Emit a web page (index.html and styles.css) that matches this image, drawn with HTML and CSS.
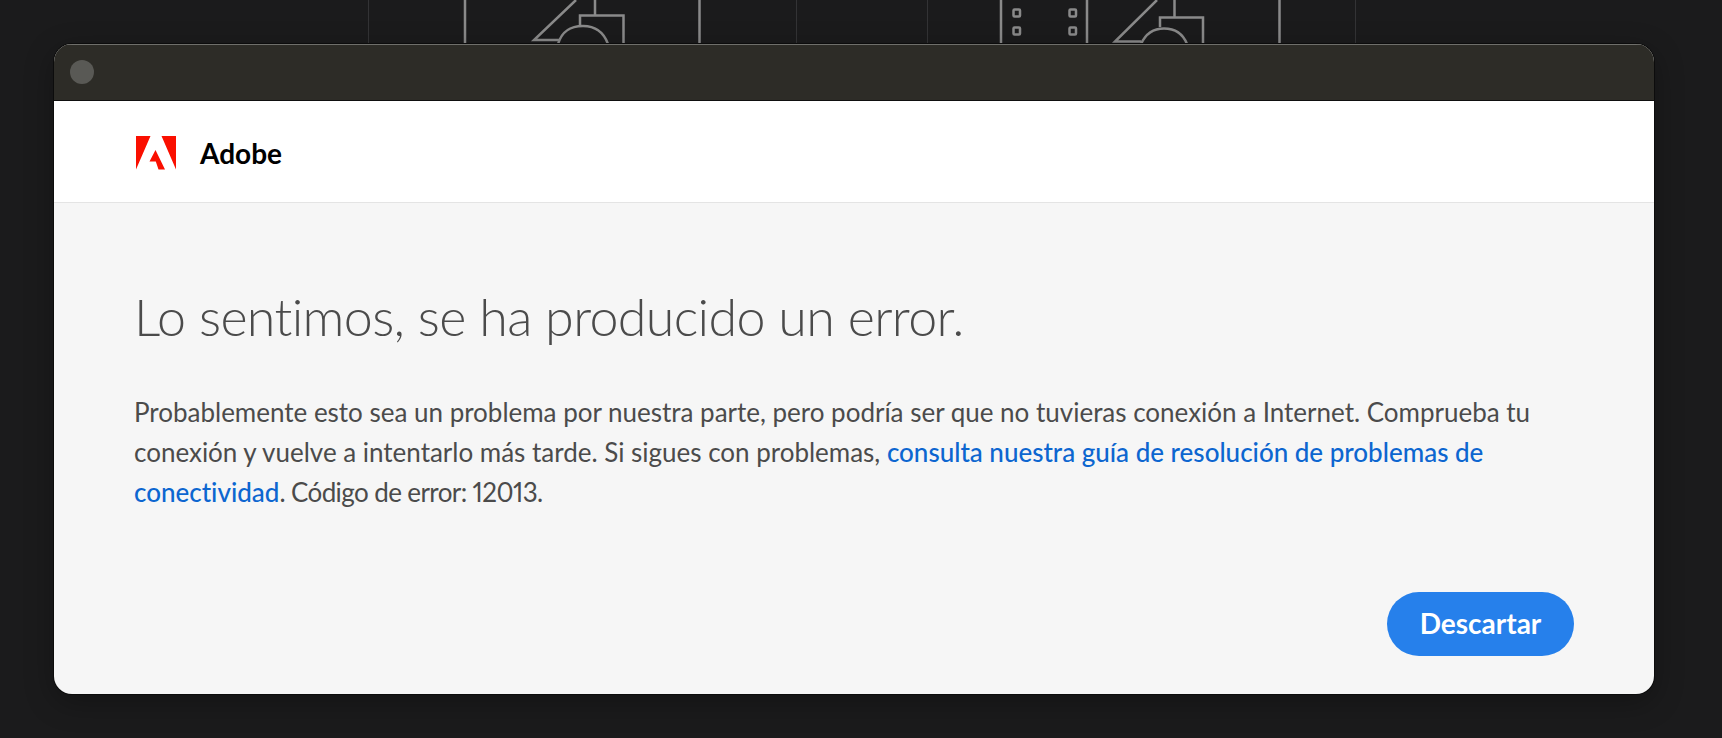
FILE: index.html
```html
<!DOCTYPE html>
<html lang="es">
<head>
<meta charset="utf-8">
<title>Adobe</title>
<link rel="stylesheet" href="styles.css">
</head>
<body>
<svg class="backdrop" width="1722" height="60" viewBox="0 0 1722 60" aria-hidden="true">
  <g class="faint">
    <path d="M368.5 0V44M796.5 0V44M927.5 0V44M1355.5 0V44"/>
  </g>
  <g class="art">
    <path d="M465 0V44M699.5 0V44M1001 0V44M1087 0V44M1279.5 0V44"/>
    <path d="M576 0L534 40H560M595 0V15M580 25V15.5H623.5V44M558 44C562 31 570 26 583 26C596 26 604 33 608 44"/>
    <path d="M1157 0L1115 41.5H1141M1174.5 0V17M1160 27V17.5H1203V44M1141 44C1146 33 1153 28.5 1164 28.5C1175 28.5 1183 34 1187 44"/>
    <rect x="1013.5" y="9.5" width="6.5" height="7" rx="1"/>
    <rect x="1013.5" y="27.5" width="6.5" height="7" rx="1"/>
    <rect x="1069.5" y="9.5" width="6.5" height="7" rx="1"/>
    <rect x="1069.5" y="27.5" width="6.5" height="7" rx="1"/>
  </g>
</svg>
<main class="dialog">
  <div class="titlebar"><span class="traffic"></span></div>
  <header class="brand">
    <svg class="logo" width="40" height="34" viewBox="0 0 40 34" aria-hidden="true">
      <path d="M0 0H14.5L0 33.5Z M25.5 0H40V33.5Z M19.5 14L29 33.5H22.5L19.8 25.5H13.5Z" fill="#fa0f00"/>
    </svg>
    <span class="wordmark">Adobe</span>
  </header>
  <section class="content">
    <h1 class="heading">Lo sentimos, se ha producido un error.</h1>
    <p class="message">Probablemente esto sea un problema por nuestra parte, pero podría ser que no tuvieras conexión a Internet. Comprueba tu conexión y vuelve a intentarlo más tarde. Si sigues con problemas, <a class="link" href="#">consulta nuestra guía de resolución de problemas de conectividad</a><span class="code">. Código de error: 12013.</span></p>
    <div class="actions"><button class="dismiss" type="button">Descartar</button></div>
  </section>
</main>
</body>
</html>
```
FILE: styles.css
```css
* { box-sizing: border-box; }
html, body { margin: 0; height: 100%; }
body {
  width: 1722px;
  height: 738px;
  overflow: hidden;
  position: relative;
  background: #1b1b1c;
  padding: 44px 68px 44px 54px;
  font-family: "Lato", "Open Sans", sans-serif;
  font-variant-ligatures: none;
  font-variant-numeric: proportional-nums;
}
.backdrop { position: absolute; top: 0; left: 0; }
.backdrop path { fill: none; stroke-linejoin: miter; }
.faint path { stroke: #333335; stroke-width: 1; }
.art path { stroke: #8a8a8a; stroke-width: 2.5; }
.art rect { fill: none; stroke: #8a8a8a; stroke-width: 2.5; }
.dialog {
  position: relative;
  height: 650px;
  border-radius: 18px;
  overflow: hidden;
  display: flex;
  flex-direction: column;
  background: #f6f6f6;
  box-shadow: 0 0 0 1px #0c0c0c, 0 8px 30px rgba(0,0,0,.3);
}
.titlebar {
  height: 57px;
  flex: none;
  background: #2d2c27;
  border-top: 1px solid #6f6f6b;
  border-bottom: 1px solid #0f0f0f;
  display: flex;
  align-items: center;
  padding: 0 0 1px 16px;
}
.traffic { width: 24px; height: 24px; border-radius: 50%; background: #595955; }
.brand {
  height: 102px;
  flex: none;
  background: #fff;
  border-bottom: 1px solid #e4e4e4;
  display: flex;
  align-items: center;
  padding: 2px 0 0 82px;
  gap: 24px;
}
.wordmark { font-size: 28px; font-weight: 700; color: #000; }
.content { flex: 1; padding: 79px 80px 38px; display: flex; flex-direction: column; }
.heading { margin: 0; font-size: 52px; line-height: 68px; font-weight: 300; color: #4b4b4b; letter-spacing: -.65px; }
.message { margin: 42px 0 0; font-size: 26px; line-height: 40px; color: #4b4b4b; letter-spacing: -.01px; }
.link { color: #0d66d0; font-weight: 500; text-decoration: none; }
.code { letter-spacing: -.6px; }
.actions { margin-top: auto; display: flex; justify-content: flex-end; }
.dismiss {
  width: 187px;
  height: 64px;
  border: 0;
  border-radius: 32px;
  background: #2680eb;
  color: #fff;
  padding: 0 0 2px;
  font: 700 28px "Lato", "Open Sans", sans-serif;
}
```
